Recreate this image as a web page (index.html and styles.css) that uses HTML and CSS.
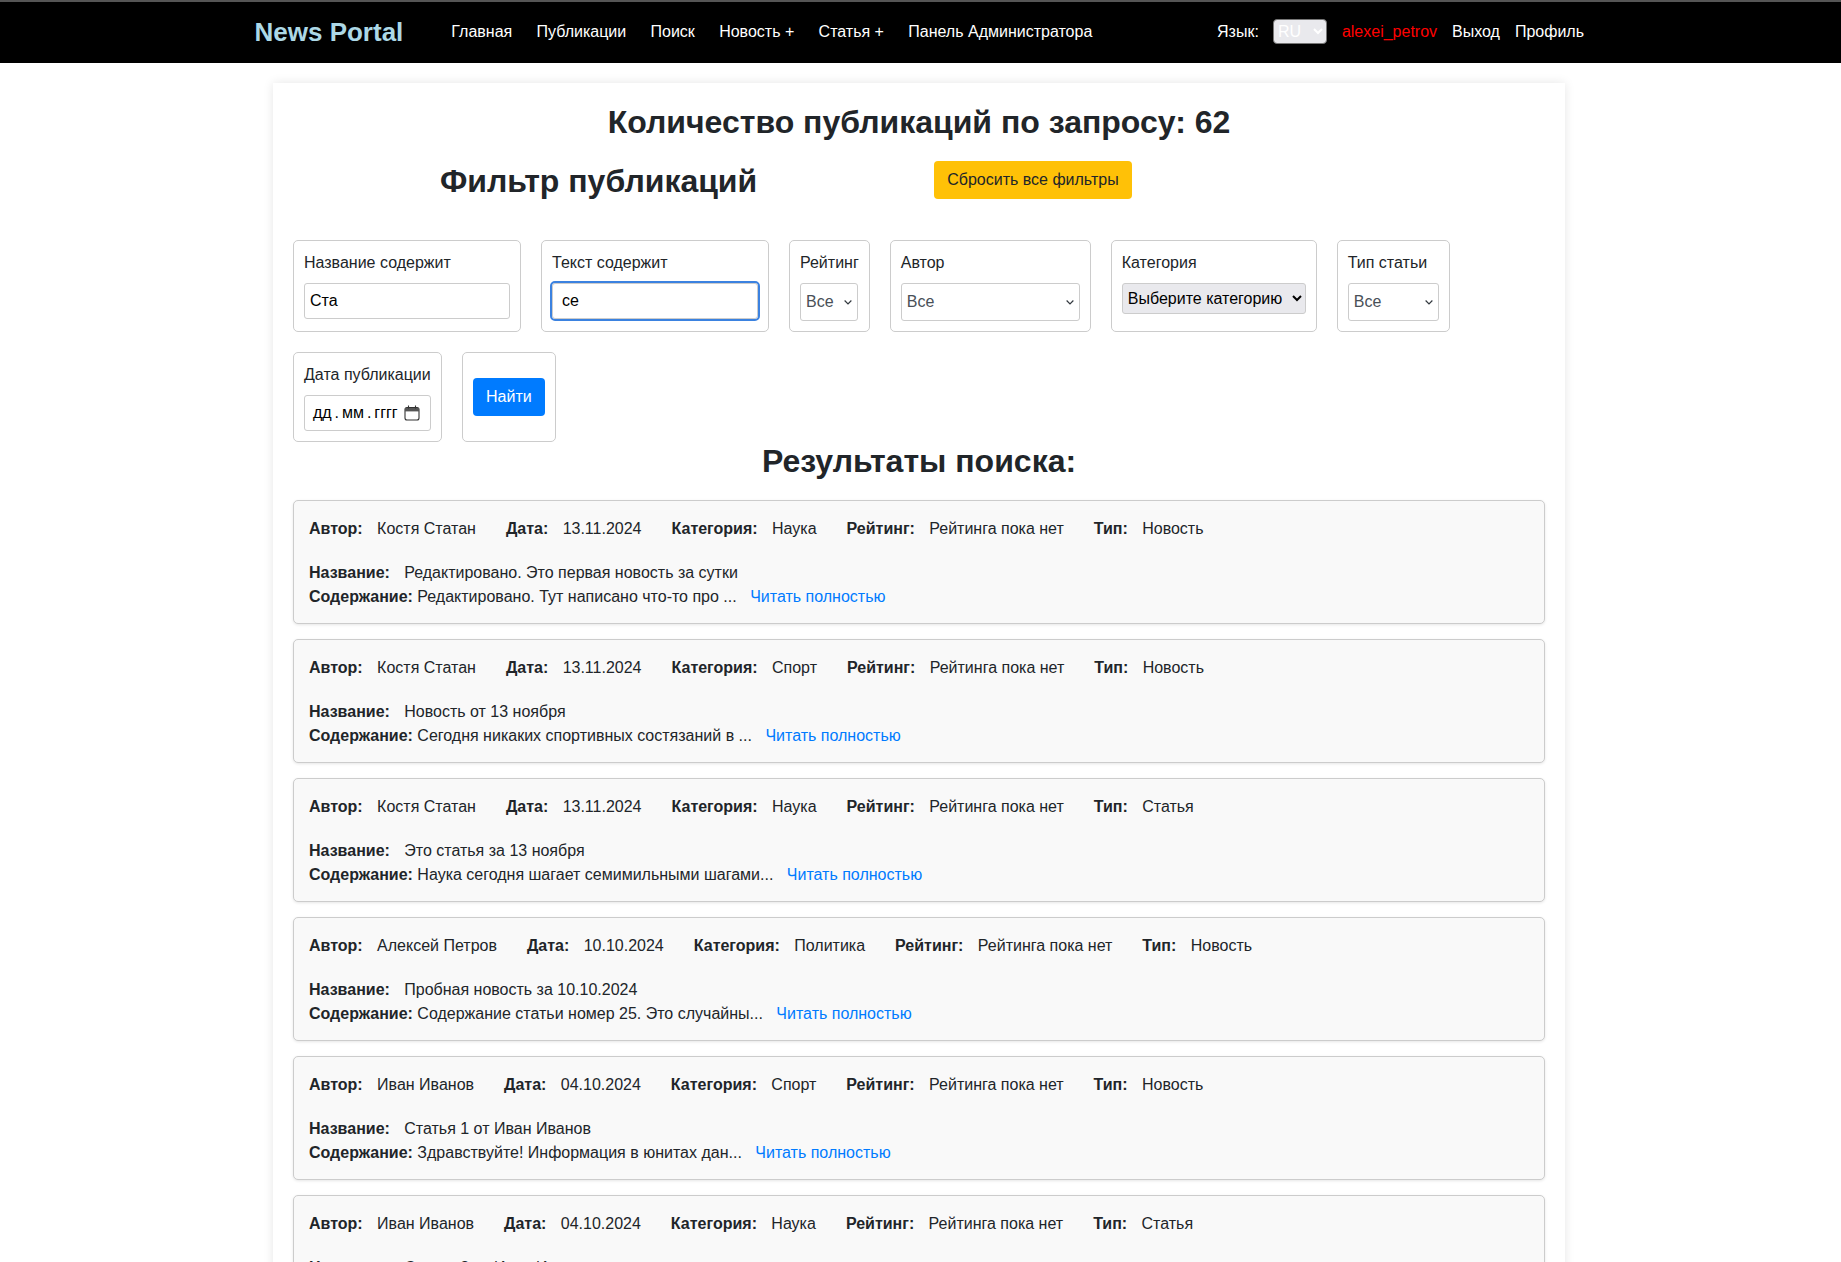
FILE: index.html
```html
<!DOCTYPE html>
<html lang="ru">
<head>
<meta charset="utf-8">
<title>News Portal</title>
<link rel="stylesheet" href="styles.css">
</head>
<body>
<header class="navbar">
  <a class="brand" href="#">News Portal</a>
  <nav class="nav-links">
    <a href="#">Главная</a>
    <a href="#">Публикации</a>
    <a href="#">Поиск</a>
    <a href="#">Новость +</a>
    <a href="#">Статья +</a>
    <a href="#">Панель Администратора</a>
  </nav>
  <div class="nav-right">
    <label class="lang-label">Язык:</label>
    <select class="lang-select"><option>RU</option></select>
    <a class="user" href="#">alexei_petrov</a>
    <a href="#">Выход</a>
    <a href="#">Профиль</a>
  </div>
</header>
<main class="page">
  <h2 class="title">Количество публикаций по запросу: 62</h2>
  <div class="filter-head">
    <h2>Фильтр публикаций</h2>
    <button class="btn btn-warning">Сбросить все фильтры</button>
  </div>
  <form class="filters">
    <div class="box box-name"><label>Название содержит</label><input class="field" value="Ста"></div>
    <div class="box box-name"><label>Текст содержит</label><input class="field focused" value="се"></div>
    <div class="box"><label>Рейтинг</label><div class="fselect fs-rating">Все<svg viewBox="0 0 16 16"><path d="M3.5 6l4.5 4.5L12.5 6"/></svg></div></div>
    <div class="box"><label>Автор</label><div class="fselect fs-author">Все<svg viewBox="0 0 16 16"><path d="M3.5 6l4.5 4.5L12.5 6"/></svg></div></div>
    <div class="box"><label>Категория</label><select class="native"><option>Выберите категорию</option></select></div>
    <div class="box"><label>Тип статьи</label><div class="fselect fs-type">Все<svg viewBox="0 0 16 16"><path d="M3.5 6l4.5 4.5L12.5 6"/></svg></div></div>
    <div class="box"><label>Дата публикации</label>
      <div class="field date"><span>дд . мм . гггг</span>
        <svg viewBox="0 0 16 16"><rect x="1" y="2.6" width="14" height="12.4" rx="2"/><path class="head" d="M1 3h14v3.4H1z"/><path d="M4.5.6v3M11.5.6v3"/></svg>
      </div>
    </div>
    <div class="box box-btn"><button class="btn btn-primary" type="button">Найти</button></div>
  </form>
  <h2 class="results-title">Результаты поиска:</h2>
  <section class="results">
    <article class="card">
      <div class="meta">
        <div><b>Автор:</b>Костя Статан</div><div><b>Дата:</b>13.11.2024</div><div><b>Категория:</b>Наука</div><div><b>Рейтинг:</b>Рейтинга пока нет</div><div><b>Тип:</b>Новость</div>
      </div>
      <div class="name"><b>Название:</b>Редактировано. Это первая новость за сутки</div>
      <div class="content"><b>Содержание:</b> Редактировано. Тут написано что-то про ... <a href="#">Читать полностью</a></div>
    </article>
    <article class="card">
      <div class="meta">
        <div><b>Автор:</b>Костя Статан</div><div><b>Дата:</b>13.11.2024</div><div><b>Категория:</b>Спорт</div><div><b>Рейтинг:</b>Рейтинга пока нет</div><div><b>Тип:</b>Новость</div>
      </div>
      <div class="name"><b>Название:</b>Новость от 13 ноября</div>
      <div class="content"><b>Содержание:</b> Сегодня никаких спортивных состязаний в ... <a href="#">Читать полностью</a></div>
    </article>
    <article class="card">
      <div class="meta">
        <div><b>Автор:</b>Костя Статан</div><div><b>Дата:</b>13.11.2024</div><div><b>Категория:</b>Наука</div><div><b>Рейтинг:</b>Рейтинга пока нет</div><div><b>Тип:</b>Статья</div>
      </div>
      <div class="name"><b>Название:</b>Это статья за 13 ноября</div>
      <div class="content"><b>Содержание:</b> Наука сегодня шагает семимильными шагами... <a href="#">Читать полностью</a></div>
    </article>
    <article class="card">
      <div class="meta">
        <div><b>Автор:</b>Алексей Петров</div><div><b>Дата:</b>10.10.2024</div><div><b>Категория:</b>Политика</div><div><b>Рейтинг:</b>Рейтинга пока нет</div><div><b>Тип:</b>Новость</div>
      </div>
      <div class="name"><b>Название:</b>Пробная новость за 10.10.2024</div>
      <div class="content"><b>Содержание:</b> Содержание статьи номер 25. Это случайны... <a href="#">Читать полностью</a></div>
    </article>
    <article class="card">
      <div class="meta">
        <div><b>Автор:</b>Иван Иванов</div><div><b>Дата:</b>04.10.2024</div><div><b>Категория:</b>Спорт</div><div><b>Рейтинг:</b>Рейтинга пока нет</div><div><b>Тип:</b>Новость</div>
      </div>
      <div class="name"><b>Название:</b>Статья 1 от Иван Иванов</div>
      <div class="content"><b>Содержание:</b> Здравствуйте! Информация в юнитах дан... <a href="#">Читать полностью</a></div>
    </article>
    <article class="card">
      <div class="meta">
        <div><b>Автор:</b>Иван Иванов</div><div><b>Дата:</b>04.10.2024</div><div><b>Категория:</b>Наука</div><div><b>Рейтинг:</b>Рейтинга пока нет</div><div><b>Тип:</b>Статья</div>
      </div>
      <div class="name"><b>Название:</b>Статья 2 от Иван Иванов</div>
    </article>
  </section>
</main>
</body>
</html>
```
FILE: styles.css
```css
* { box-sizing: border-box; }
html, body { height: 100%; overflow: hidden; }
body { margin: 0; background: #fff; color: #212529; font: 16px/24px "Liberation Sans", Arial, sans-serif; }
a { text-decoration: none; }
h2 { margin: 0; font-size: 32px; line-height: 38.4px; font-weight: 700; }

.navbar { display: flex; align-items: center; height: 63px; padding: 0 257px 1px 254.5px; background: #000; border-top: 2px solid #555; }
.brand { color: #add8e6; font-size: 26px; font-weight: 700; line-height: 32px; margin-right: 48px; }
.nav-links { display: flex; gap: 24.3px; }
.nav-links a, .nav-right a { color: #fff; }
.nav-right { display: flex; align-items: center; gap: 15px; margin-left: auto; color: #fff; }
.nav-right .user { color: #f00; }
.lang-select { width: 54px; height: 25px; margin: -2px 0 0 -1px; font: 16px "Liberation Sans", Arial, sans-serif; color: #fff; background-color: #e9e9ed; border: 1px solid #767676; border-radius: 4px; }

.page { margin: 20px 276px 0 273px; padding: 20px; background: #fff; box-shadow: 0 0 10px rgba(0,0,0,.1); }
.title { text-align: center; margin-bottom: 20px; }
.filter-head { display: flex; align-items: center; padding-left: 147px; gap: 177px; height: 38px; }
.filter-head h2 { margin-top: 2px; }

.btn { height: 38px; padding: 6px 12px; border: 1px solid transparent; border-radius: 4px; font: 16px/24px "Liberation Sans", Arial, sans-serif; }
.btn-warning { background: #ffc107; color: #212529; }
.btn-primary { background: #007bff; color: #fff; }

.filters { display: flex; flex-wrap: wrap; gap: 20px; margin-top: 41px; }
.box { display: flex; flex-direction: column; padding: 10px; border: 1px solid #ccc; border-radius: 5px; background: #fff; }
.box label { margin-bottom: 8px; white-space: nowrap; }
.box-name { width: 228px; }
.box-btn { justify-content: center; }

.field { height: 36px; width: 100%; padding: 6px 5px; border: 1px solid #ccc; border-radius: 3px; background: #fff; color: #000; font: 16px "Liberation Sans", Arial, sans-serif; }
.field.focused { outline: 2px solid #3b82e0; outline-offset: 0; padding-left: 9px; border-radius: 3px; }
.date { display: flex; align-items: center; justify-content: space-between; width: 127px; padding: 0 10px 0 8px; white-space: nowrap; word-spacing: -1.5px; }
.date svg { width: 16px; height: 16px; fill: none; stroke: #333; stroke-width: 1.1; }
.date svg .head { fill: #555; stroke: none; }

.fselect { position: relative; display: flex; align-items: center; height: 38px; padding: 0 5px; border: 1px solid #ccc; border-radius: 3px; color: #495057; }
.fselect svg { position: absolute; right: 3px; top: 12px; width: 12px; height: 12px; fill: none; stroke: #343a40; stroke-width: 1.6; }
.fs-rating { width: 58px; }
.fs-author { width: 179px; }
.fs-type { width: 91px; }
.native { font: 16px "Liberation Sans", Arial, sans-serif; width: 184px; height: 31px; padding-left: 1px; background-color: #e9e9ed; border: 1px solid #ccc; border-radius: 3px; color: #000; }

.results-title { text-align: center; margin-bottom: 19px; }
.card { margin-bottom: 15px; padding: 16px 15px 15px; height: 124px; background: #f9f9f9; border: 1px solid #ccc; border-radius: 5px; box-shadow: 0 1px 3px rgba(0,0,0,.1); }
.card a { color: #007bff; margin-left: 9px; }
.meta { display: flex; gap: 30px; margin-bottom: 20px; }
.meta b, .name b { margin-right: 14.4px; }
```
